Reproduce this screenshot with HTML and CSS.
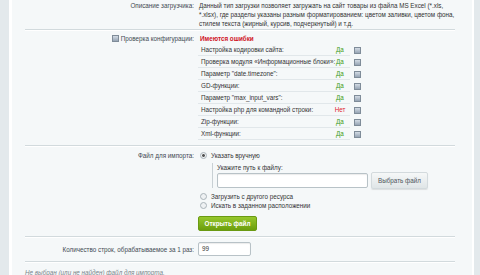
FILE: index.html
```html
<!DOCTYPE html>
<html lang="ru">
<head>
<meta charset="utf-8">
<link rel="stylesheet" href="styles.css">
</head>
<body>
<div class="page">
  <div class="form">
    <div class="row row-desc">
      <div class="label">Описание загрузчика:</div>
      <div class="value desc">Данный тип загрузки позволяет загружать на сайт товары из файла MS Excel (*.xls,<br>*.xlsx), где разделы указаны разным форматированием: цветом заливки, цветом фона,<br>стилем текста (жирный, курсив, подчеркнутый) и т.д.</div>
    </div>
    <div class="row row-check">
      <div class="label"><span class="ico"></span> Проверка конфигурации:</div>
      <div class="value">
        <div class="err">Имеются ошибки</div>
        <div class="checks">
          <div class="c-name">Настройка кодировки сайта:</div><div class="c-st ok">Да</div><div class="c-ic"><span class="ico"></span></div>
          <div class="c-name">Проверка модуля «Информационные блоки»:</div><div class="c-st ok">Да</div><div class="c-ic"><span class="ico"></span></div>
          <div class="c-name">Параметр "date.timezone":</div><div class="c-st ok">Да</div><div class="c-ic"><span class="ico"></span></div>
          <div class="c-name">GD-функции:</div><div class="c-st ok">Да</div><div class="c-ic"><span class="ico"></span></div>
          <div class="c-name">Параметр "max_input_vars":</div><div class="c-st ok">Да</div><div class="c-ic"><span class="ico"></span></div>
          <div class="c-name">Настройка php для командной строки:</div><div class="c-st no">Нет</div><div class="c-ic"><span class="ico"></span></div>
          <div class="c-name">Zip-функции:</div><div class="c-st ok">Да</div><div class="c-ic"><span class="ico"></span></div>
          <div class="c-name">Xml-функции:</div><div class="c-st ok">Да</div><div class="c-ic"><span class="ico"></span></div>
        </div>
      </div>
    </div>
    <div class="row row-file">
      <div class="label">Файл для импорта:</div>
      <div class="value">
        <div class="radio-line"><span class="radio on"></span>Указать вручную</div>
        <div class="sub">
          <div class="sub-title">Укажите путь к файлу:</div>
          <div class="sub-inputs"><span class="input wide"></span><span class="btn">Выбрать файл</span></div>
        </div>
        <div class="radio-line r2"><span class="radio"></span>Загрузить с другого ресурса</div>
        <div class="radio-line"><span class="radio"></span>Искать в заданном расположении</div>
        <div class="open-wrap"><span class="btn-green">Открыть файл</span></div>
      </div>
    </div>
    <div class="row row-count">
      <div class="label">Количество строк, обрабатываемое за 1 раз:</div>
      <div class="value"><span class="input small">99</span></div>
    </div>
    <div class="note">Не выбран (или не найден) файл для импорта.</div>
  </div>
</div>
</body>
</html>
```

FILE: styles.css
```css
html, body {
  margin: 0;
  padding: 0;
  height: 100%;
}
body {
  background: #e3e9ec;
  font-family: "Liberation Sans", Arial, sans-serif;
  font-size: 6.3px;
  line-height: 9px;
  color: #333;
  overflow: hidden;
}
.page {
  margin: 0 6px 0 9px;
  border-left: 3px solid #fff;
  border-right: 2px solid #fff;
  background: #f5f8f9;
  height: 100%;
}
.form {
  padding: 0 17px 0 13px;
}
.row {
  display: grid;
  grid-template-columns: 169px 1fr;
  column-gap: 5px;
  border-bottom: 1px solid #d2dadd;
  box-shadow: 0 1px 0 #fff;
}
.label {
  text-align: right;
  color: #3f4a52;
  white-space: nowrap;
}
.value {
  white-space: nowrap;
}
.row-desc {
  padding: 1px 0;
}
.desc {
  color: #333;
}
.row-check {
  padding: 4px 0 5px;
}
.row-check .label {
  display: flex;
  justify-content: flex-end;
  align-items: center;
  gap: 2px;
  height: 9px;
}
.ico {
  display: inline-block;
  width: 5px;
  height: 5px;
  border: 1px solid #7f8c99;
  background: linear-gradient(#d3dbe4, #96a4b4);
  vertical-align: middle;
}
.err {
  color: #d0131f;
  font-weight: bold;
  padding-left: 1px;
}
.checks {
  margin: 1px 0 0 -1px;
  display: grid;
  grid-template-columns: 132px 20px 14px;
  grid-auto-rows: 12px;
}
.c-name, .c-st {
  border-bottom: 1px solid #e1e7ea;
  display: flex;
  align-items: center;
}
.c-name {
  padding-left: 3px;
  color: #333;
}
.c-st {
  justify-content: center;
}
.c-ic {
  display: flex;
  align-items: center;
  padding-left: 4px;
}
.ok { color: #3c9a15; }
.no { color: #e0252b; }
.row-file {
  padding: 5px 0 5px;
}
.radio-line {
  display: flex;
  align-items: center;
  height: 9px;
  margin-left: 1px;
  color: #333;
}
.radio {
  display: inline-block;
  width: 5px;
  height: 5px;
  border-radius: 50%;
  border: 1px solid #a9b3b9;
  background: #eef1f3;
  margin-right: 4px;
  box-sizing: content-box;
}
.radio.on {
  background: radial-gradient(circle, #555 0 1.2px, #eef1f3 1.6px);
}
.sub {
  margin: 3px 0 0 13px;
  border-left: 1px solid #c8d0d4;
  padding-left: 4px;
}
.sub-title {
  height: 9px;
}
.sub-inputs {
  display: flex;
  align-items: center;
  gap: 3px;
  height: 16px;
}
.input {
  display: inline-block;
  box-sizing: border-box;
  background: #fff;
  border: 1px solid #b8c2c7;
  border-radius: 2px;
  box-shadow: inset 0 1px 1px rgba(0,0,0,0.08);
}
.input.wide {
  width: 151px;
  height: 15px;
}
.btn {
  display: inline-flex;
  align-items: center;
  justify-content: center;
  box-sizing: border-box;
  width: 57px;
  height: 17px;
  border: 1px solid #d3dadd;
  border-radius: 2px;
  background: linear-gradient(#f6f8f8, #dfe5e7);
  color: #4b555b;
  box-shadow: 0 1px 1px rgba(0,0,0,0.1);
}
.r2 {
  margin-top: 4px;
}
.open-wrap {
  margin: 6px 0 0 -1px;
  height: 15px;
}
.btn-green {
  display: inline-flex;
  align-items: center;
  justify-content: center;
  width: 59px;
  height: 15px;
  box-sizing: border-box;
  border-radius: 2px;
  background: linear-gradient(#96c72c, #6b9e0c);
  border: 1px solid #6a9a12;
  color: #fff;
  font-weight: bold;
}
.row-count {
  padding: 5px 0 5px;
  align-items: center;
}
.input.small {
  width: 53px;
  height: 14px;
  margin-left: -1px;
  padding-left: 3px;
  line-height: 12px;
  color: #333;
}
.note {
  padding-top: 6px;
  font-style: italic;
  color: #7a858b;
}
```
